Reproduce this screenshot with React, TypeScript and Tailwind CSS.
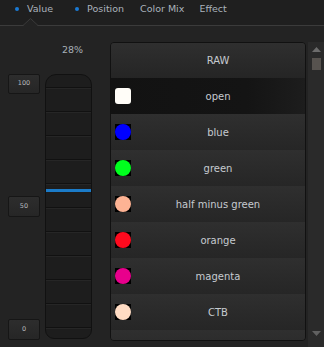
import React from "react";

const rows: { name: string; color: string }[] = [
  { name: "blue", color: "#0000ff" },
  { name: "green", color: "#00ff1e" },
  { name: "half minus green", color: "#fdb394" },
  { name: "orange", color: "#ff0a1e" },
  { name: "magenta", color: "#e8008c" },
  { name: "CTB", color: "#ffdcc4" },
  { name: "", color: "#ffc080" },
];

function Row({ name, color }: { name: string; color: string }) {
  return (
    <div className="h-[36px] shrink-0 flex items-center bg-linear-to-b from-[#2f2f2f] to-[#262626]">
      <div className="ml-[4px] mb-[1px] w-[16px] h-[16px] bg-black flex items-center justify-center">
        <div className="w-[16px] h-[16px] rounded-full" style={{ backgroundColor: color }} />
      </div>
      <div className="flex-1 text-center text-[10px] text-[#c6cad0]">{name}</div>
    </div>
  );
}

export default function App() {
  const segments = Array.from({ length: 10 });
  return (
    <div className="w-[324px] h-[347px] overflow-hidden bg-[#232323] font-['DejaVu_Sans',Verdana,sans-serif] select-none">
      {/* Tabs */}
      <div className="relative h-[26px] bg-[#1f1f1f] border-b border-[#3b3b3b] flex items-start text-[9.5px] leading-[12px] text-[#aab3bc]">
        <span className="ml-[15px] mt-[7px] w-[4px] h-[4px] rounded-full bg-[#1a7ad4]" />
        <span className="ml-[8px] mt-[3px]">Value</span>
        <span className="ml-[22px] mt-[7px] w-[4px] h-[4px] rounded-full bg-[#1a7ad4]" />
        <span className="ml-[8px] mt-[3px]">Position</span>
        <span className="ml-[16px] mt-[3px]">Color Mix</span>
        <span className="ml-[15px] mt-[3px]">Effect</span>
        <svg className="absolute left-[23px] top-[18px]" width="15" height="8" viewBox="0 0 15 8">
          <polygon points="0,8 7.5,0.5 15,8" fill="#232323" />
          <polyline points="0,7.5 7.5,0.5 15,7.5" fill="none" stroke="#3b3b3b" strokeWidth="1" />
        </svg>
      </div>

      {/* Body */}
      <div className="flex pt-[16px]">
        {/* Left: fader */}
        <div className="w-[110px] shrink-0 flex flex-col">
          <div className="mt-[2px] h-[12px] leading-[12px] text-[9.5px] text-[#a8b0b8] pl-[62px]">28%</div>
          <div className="mt-[18px] flex">
            <div className="ml-[8px] w-[32px] h-[266px] flex flex-col justify-between">
              {["100", "50", "0"].map((v, i) => (
                <div
                  key={v}
                  className={`${i === 0 ? "h-[20px]" : "h-[21px]"} rounded-[2px] border border-[#161616] bg-linear-to-b from-[#2d2d2d] to-[#262626] flex items-center justify-center text-[6.5px] text-[#b4b8bc]`}
                >
                  {v}
                </div>
              ))}
            </div>
            <div className="relative ml-[5px] w-[47px] h-[265px] border border-[#111111] rounded-t-[11px] rounded-b-[9px] bg-[#1d1d1d] flex flex-col overflow-hidden">
              <div className="h-[12px] shrink-0" />
              {segments.map((_, i) => (
                <div key={i} className="h-[24px] shrink-0 border-t border-[#111111] shadow-[inset_0_1px_0_#262626]" />
              ))}
              <div className="h-[11px] shrink-0 border-t border-[#111111] shadow-[inset_0_1px_0_#262626]" />
              <div className="absolute left-0 right-0 top-[114px] h-[3px] bg-[#1b7bc8]" />
            </div>
          </div>
        </div>

        {/* List */}
        <div className="w-[196px] h-[299px] shrink-0 border border-[#111111] rounded-[4px] overflow-hidden flex flex-col">
          <div className="h-[35px] shrink-0 flex items-center bg-linear-to-b from-[#2f2f2f] to-[#252525]">
            <div className="ml-[20px] flex-1 text-center text-[10px] text-[#c6cad0]">RAW</div>
          </div>
          <div className="h-[36px] shrink-0 flex items-center bg-linear-to-r from-[#121212] via-[#141414] via-70% to-[#1d1d1d]">
            <div className="ml-[4px] mb-[1px] w-[16px] h-[16px] bg-[#fffdf8] rounded-[3px]" />
            <div className="flex-1 text-center text-[10px] text-[#c6cad0]">open</div>
          </div>
          {rows.map((r, i) => (
            <Row key={i} name={r.name} color={r.color} />
          ))}
        </div>

        {/* Scrollbar */}
        <div className="ml-[2px] w-[16px] h-[305px] bg-[#2a2a2a] flex flex-col items-center">
          <svg className="mt-[5px]" width="9" height="5" viewBox="0 0 9 5">
            <polygon points="0,5 4.5,0 9,5" fill="#6c6c6c" />
          </svg>
          <div className="mt-[6px] w-[9px] h-[12px] bg-[#57534f]" />
          <div className="flex-1" />
          <svg className="mb-[11px]" width="9" height="5" viewBox="0 0 9 5">
            <polygon points="0,0 9,0 4.5,5" fill="#606060" />
          </svg>
        </div>
      </div>
    </div>
  );
}
